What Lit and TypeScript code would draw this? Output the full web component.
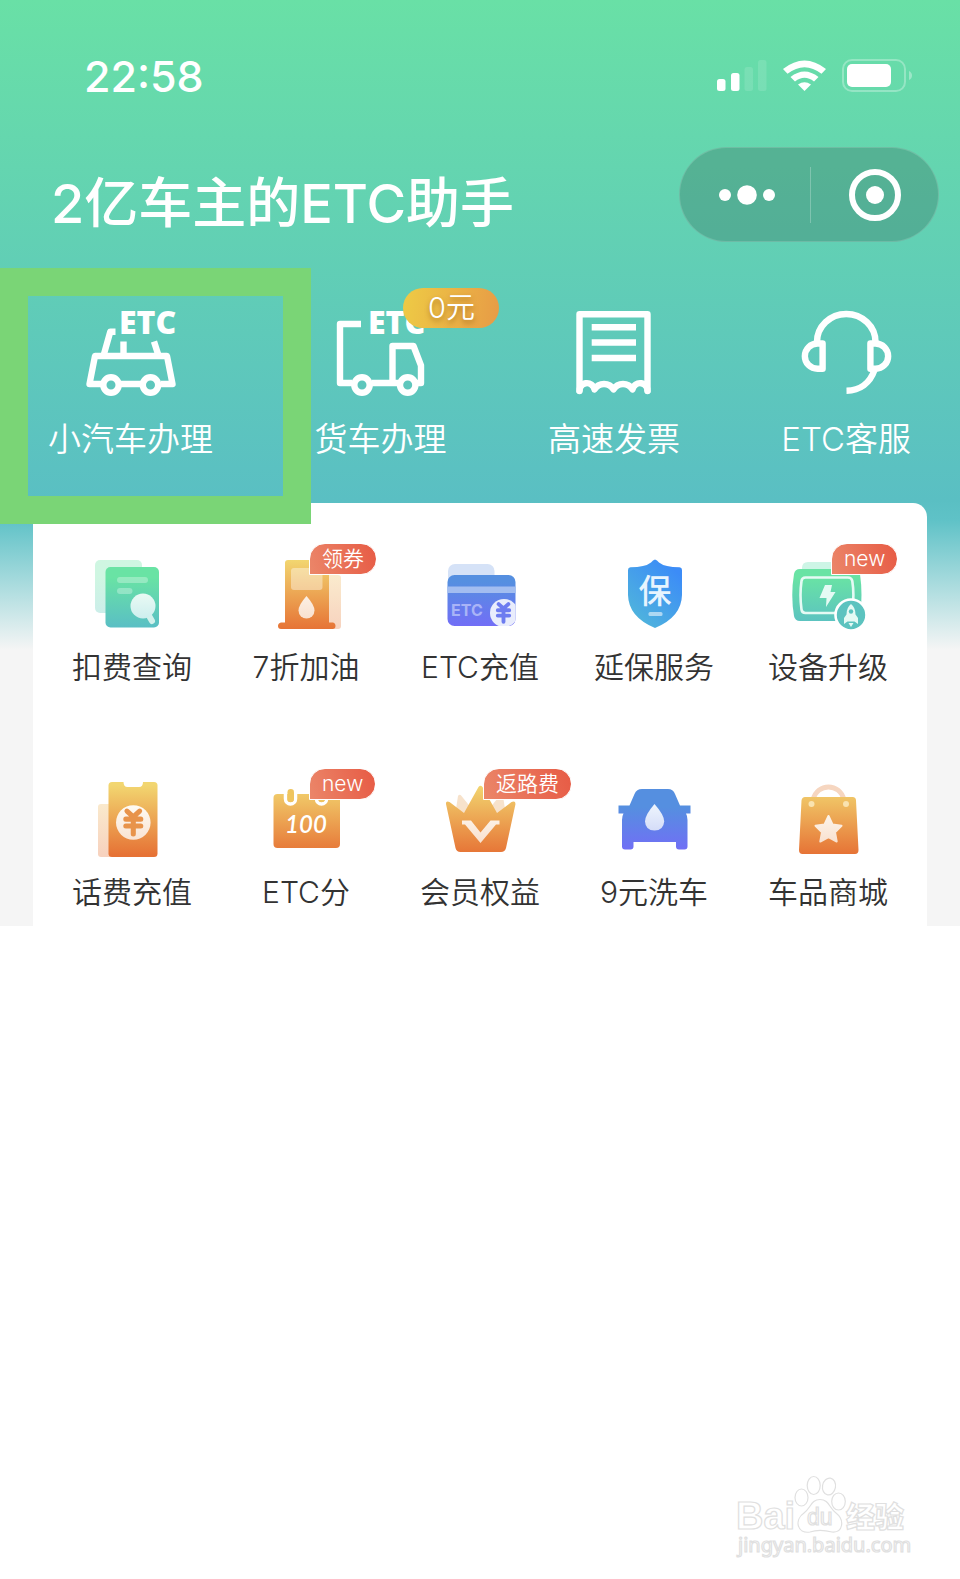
import { LitElement, html, svg, css, nothing, TemplateResult } from "lit";
import { customElement } from "lit/decorators.js";

interface Entry {
  label: string;
  icon: TemplateResult;
  badge?: string;
}

const yen = (x: number, y: number, s: number, color: string) => svg`
  <g transform="translate(${x} ${y}) scale(${s})" fill="none" stroke=${color} stroke-width="4.4" stroke-linecap="round" stroke-linejoin="round">
    <path d="M-5.5 -9.5L0 -4.5L5.5 -9.5M-6.5 -2.5H6.5M-6.5 3.5H6.5M0 -3V10.5"/>
  </g>`;

const wheels = (a: number, b: number) => svg`
  <circle cx=${a} cy="77" r="7.7"/><circle cx=${b} cy="77" r="7.7"/>`;

const etcMark = svg`<text class="mark" x="34" y="26">ETC</text>`;

const carIcon = svg`
  <path d="M16 76H4.5L10 48H82L87.5 76H76M36 76H56"/>
  <path d="M19 46L25.3 23.7H30.5M38.5 33.5V46M69 33.5L73 46"/>
  ${wheels(26, 65.5)}${etcMark}`;

const truckIcon = svg`
  <path d="M27 16H6V75H18M38 75H64M58.5 75V38H79.5L87 57.5V75H83"/>
  ${wheels(28, 73.7)}${etcMark}`;

const receiptIcon = svg`
  <path stroke-linecap="round" d="M11.5 83V6.2H79.5V83"/>
  <path d="M11.5 84A7.6 7.6 0 0 1 26.5 81.5A11 11 0 0 1 45.5 81.5A11 11 0 0 1 64.5 81.5A7.6 7.6 0 0 1 79.5 84"/>
  <path d="M23.7 19.3H68M23.7 34.5H68M23.7 50H68"/>`;

const headsetIcon = svg`
  <path d="M17 35V34A29.2 28 0 0 1 75.5 34V35"/>
  <path d="M22.6 35.5V60.8H17.5A12.6 12.6 0 0 1 17.5 35.5Z"/>
  <path d="M70.4 35.5V60.8H75.5A12.6 12.6 0 0 0 75.5 35.5Z"/>
  <path d="M74.5 62C70 75 60 82.5 46.5 82.7"/>`;

const services: Entry[] = [
  { label: "小汽车办理", icon: carIcon },
  { label: "货车办理", icon: truckIcon, badge: "0元" },
  { label: "高速发票", icon: receiptIcon },
  { label: "ETC客服", icon: headsetIcon },
];

const tools: Entry[] = [
  {
    label: "扣费查询",
    icon: svg`
      <rect x="3" y="8" width="47" height="53" rx="5" fill="url(#green)" opacity=".32"/>
      <rect x="13.5" y="15" width="53.5" height="60.5" rx="5" fill="url(#green)"/>
      <rect x="25" y="25" width="31" height="6" rx="3" fill="#fff" opacity=".3"/>
      <rect x="25" y="36" width="15.5" height="6" rx="3" fill="#fff" opacity=".3"/>
      <path d="M56 62L60 69" stroke="#d3f1ec" stroke-width="6" stroke-linecap="round"/>
      <circle cx="51" cy="54" r="12.5" fill="url(#pale-green)"/>`,
  },
  {
    label: "7折加油",
    badge: "领券",
    icon: svg`
      <rect x="60" y="23" width="15" height="54" rx="3" fill="url(#amber)" opacity=".32"/>
      <path d="M22 8H60Q63 8 63 11V70.5H67Q69.5 71 69.5 74Q69.5 77 66.5 77H15Q12 77 12 74Q12 71 15 70.5H19V11Q19 8 22 8Z" fill="url(#amber)"/>
      <rect x="25" y="16" width="31.5" height="22" rx="3" fill="#fff" opacity=".4"/>
      <path d="M40.5 44Q48.5 53 48.5 58.5A8 8 0 0 1 32.5 58.5Q32.5 53 40.5 44Z" fill="url(#pale-amber)"/>`,
  },
  {
    label: "ETC充值",
    icon: svg`
      <rect x="8" y="12" width="46.5" height="40" rx="7" fill="#d5e2f7"/>
      <clipPath id="card"><rect x="7" y="23" width="68.5" height="51" rx="7"/></clipPath>
      <rect x="7.5" y="23" width="68" height="51" rx="7" fill="url(#indigo)"/>
      <rect x="7.5" y="34.5" width="68" height="6.5" fill="#a2bdf0"/>
      <text class="card-mark" x="11" y="64">ETC</text>
      <g clip-path="url(#card)"><circle cx="64" cy="61" r="14" fill="#e9edfc"/></g>
      ${yen(63.5, 60.5, 0.88, "#6d7cf0")}`,
  },
  {
    label: "延保服务",
    icon: svg`
      <path d="M41 7.5Q43 8 45 10.5Q51 15.3 65.5 15.3Q68 15.5 68 18V43Q67.5 65 41 76Q14.5 65 14 43V18Q14 15.5 16.5 15.3Q31 15.3 37 10.5Q39 8 41 7.5Z" fill="url(#blue)"/>
      <text class="shield-mark" x="41" y="51" text-anchor="middle">保</text>
      <rect x="34.5" y="60" width="14" height="4" rx="1.5" fill="#fff" opacity=".55"/>`,
  },
  {
    label: "设备升级",
    badge: "new",
    icon: svg`
      <path d="M14 20V16Q14 10 20 10H60V20Z" fill="#cdf5e6"/>
      <path d="M12 17H66Q71 17 72 22Q75 43 72 64Q71 69 66 69H12Q7 69 6 64Q2.5 43 6 22Q7 17 12 17Z" fill="url(#green)"/>
      <path d="M17.5 25.5H60Q63.5 25.5 64.3 29Q66.5 43 64.3 57.5Q63.5 61 60 61H17.5Q14 61 13.5 57.5Q11.5 43 13.5 29Q14 25.5 17.5 25.5Z" fill="none" stroke="#e5faf4" stroke-width="2.6"/>
      <path d="M37 33H44L42.5 40H47.5L38 55L38.5 46H31.5Z" fill="#e5faf4"/>
      <circle cx="63" cy="63" r="15.5" fill="#5cc3bf" stroke="#fff" stroke-width="2.6"/>
      <path d="M63 52Q67.5 55.5 67.5 62.5L70 66V72L66.5 69.5H59.5L56 72V66L58.5 62.5Q58.5 55.5 63 52Z" fill="#e5faf4"/>
      <path d="M60.5 71H65.5L63 75Z" fill="#e5faf4"/>
      <circle cx="63" cy="59.5" r="2.2" fill="#5cc3bf"/>`,
  },
  {
    label: "话费充值",
    icon: svg`
      <rect x="6" y="27" width="20" height="53" rx="3" fill="url(#amber)" opacity=".32"/>
      <rect x="16.5" y="5" width="49" height="75" rx="3.5" fill="url(#amber)"/>
      <path d="M31.5 5H51Q51 10 47 10H35.5Q31.5 10 31.5 5Z" fill="#fff"/>
      <circle cx="41.3" cy="45.5" r="17.3" fill="url(#pale-amber)"/>
      ${yen(41.3, 45, 1.15, "#e8934a")}`,
  },
  {
    label: "ETC分",
    badge: "new",
    icon: svg`
      <rect x="7.5" y="17" width="66.5" height="54" rx="4" fill="url(#amber)"/>
      <path d="M19.5 15V22A5 5 0 0 0 29.5 22V15M50.5 15V22A5 5 0 0 0 60.5 22V15" fill="none" stroke="#fff" stroke-width="3.5"/>
      <rect x="21.5" y="12" width="6.5" height="13" rx="3.2" fill="#efc55f"/>
      <rect x="52.5" y="12" width="6.5" height="13" rx="3.2" fill="#efc55f"/>
      <text class="score" x="40" y="56" text-anchor="middle">100</text>`,
  },
  {
    label: "会员权益",
    badge: "返路费",
    icon: svg`
      <path d="M16 32L18 19Q19.5 16.5 21.5 19L32 32L26 38ZM65 32L63 19Q61.5 16.5 59.5 19L49 32L55 38Z" fill="#f7e2cb"/>
      <path d="M6 27Q5.5 23.5 9.5 25L24 36L38.5 10Q40.5 7.5 42.5 10L57 36L71.5 25Q75.5 23.5 75.5 27L66 71Q65 75 61 75H20.5Q16.5 75 15.5 71Z" fill="url(#amber)"/>
      <path d="M22 43.5H31L40.5 55.5L50.5 43.5H59.5V47.5H56L40.5 66L25 47.5H22Z" fill="url(#pale-amber)"/>`,
  },
  {
    label: "9元洗车",
    icon: svg`
      <path d="M28 12H54Q59 12 61 17L66 28.5H76.5V36.5H72Q73.5 39 73.5 43V69.5Q73.5 72.5 70.5 72.5H65Q62 72.5 62 69.5V65H19.5V69.5Q19.5 72.5 16.5 72.5H11Q8 72.5 8 69.5V43Q8 39 9.5 36.5H4.5V28.5H15.5L20.5 17Q22.5 12 28 12Z" fill="url(#indigo)"/>
      <path d="M40.5 27Q50.2 38 50.2 44.5Q49.5 53.5 40.5 53.5Q31.5 53.5 31 44.5Q31 38 40.5 27Z" fill="url(#pale-blue)"/>`,
  },
  {
    label: "车品商城",
    icon: svg`
      <path d="M25 23C29 5.5 52 5.5 56 23" fill="none" stroke="#f6d6c0" stroke-width="5"/>
      <path d="M17 20H64.5Q68 20 68 23.5L70.5 73Q70.5 77 67 77H14.5Q11 77 11 73L13.5 23.5Q14 20 17 20Z" fill="url(#amber)"/>
      <circle cx="23.5" cy="27" r="3" fill="#f9e3b0"/><circle cx="58" cy="27" r="3" fill="#f9e3b0"/>
      <path d="M40.5 39L44.5 47.5L53.5 48.8L47 55.2L48.7 64.5L40.5 60L32.3 64.5L34 55.2L27.5 48.8L36.5 47.5Z" fill="url(#pale-amber)" stroke="url(#pale-amber)" stroke-width="2" stroke-linejoin="round"/>`,
  },
];

@customElement("app-root")
export class AppRoot extends LitElement {
  static styles = css`
    :host {
      display: block;
      font-family: Inter, "Noto Sans CJK SC", sans-serif;
    }
    .page {
      position: relative;
      display: flex;
      flex-direction: column;
      min-height: 100vh;
      box-sizing: border-box;
      background: #fff;
    }
    .defs {
      position: absolute;
      width: 0;
      height: 0;
    }
    .top {
      padding-top: 56px;
      background: linear-gradient(#69e0a6 0, #5abfc3 500px, #5fc2c7 520px, #f5f5f5 650px);
    }
    .status {
      display: flex;
      align-items: center;
      justify-content: space-between;
      height: 40px;
      padding: 0 47px 0 84px;
      color: #fff;
    }
    .clock {
      font-size: 43px;
      font-weight: 500;
      line-height: 40px;
    }
    .signals {
      width: 196px;
      height: 34px;
    }
    .title-row {
      display: flex;
      align-items: flex-end;
      justify-content: space-between;
      margin-top: 51px;
      padding: 0 21px 0 51px;
    }
    h1 {
      margin: 0;
      color: #fff;
      font-size: 54px;
      font-weight: 500;
      line-height: 76px;
    }
    .capsule {
      display: flex;
      align-items: center;
      width: 260px;
      height: 95px;
      box-sizing: border-box;
      border: 1px solid rgba(255, 255, 255, 0.15);
      border-radius: 48px;
      background: rgba(62, 125, 108, 0.4);
    }
    .capsule button {
      flex: 1;
      display: flex;
      align-items: center;
      justify-content: center;
      height: 56px;
      padding: 0 0 0 4px;
      border: 0;
      background: none;
    }
    .capsule button + button {
      padding: 0 0 0 2px;
      border-left: 1px solid rgba(255, 255, 255, 0.25);
    }
    .more {
      width: 60px;
      height: 20px;
    }
    .close {
      width: 52px;
      height: 52px;
    }
    .services {
      display: flex;
      justify-content: space-between;
      margin-top: 66px;
      padding: 0 49px 0 48px;
    }
    .service {
      position: relative;
      display: flex;
      flex-direction: column;
      align-items: center;
      gap: 16px;
      color: #fff;
      font-size: 33px;
      font-weight: 350;
      line-height: 46px;
      text-decoration: none;
      white-space: nowrap;
    }
    .service svg {
      width: 92px;
      height: 92px;
      overflow: visible;
      fill: none;
      stroke: #fff;
      stroke-width: 6.4px;
      stroke-linejoin: round;
    }
    .mark {
      fill: #fff;
      stroke: none;
      font: 800 32px "Open Sans", sans-serif;
    }
    .price {
      position: absolute;
      top: -20px;
      left: 89px;
      width: 96px;
      border-radius: 20px;
      background: linear-gradient(100deg, #eecb45, #e79b46);
      font-size: 29px;
      line-height: 40px;
      text-align: center;
      text-shadow: 0 3px 5px rgba(120, 70, 0, 0.5);
    }
    .highlight {
      position: absolute;
      top: 268px;
      left: 0;
      width: 311px;
      height: 256px;
      box-sizing: border-box;
      border: 28px solid #7ad576;
      pointer-events: none;
    }
    .panel {
      display: grid;
      grid-template-columns: repeat(5, 1fr);
      row-gap: 90px;
      margin: 41px 33px 0;
      padding: 49px 12px 14px;
      border-radius: 14px 14px 0 0;
      background: #fff;
    }
    .tool {
      position: relative;
      display: flex;
      flex-direction: column;
      align-items: center;
      gap: 7px;
      color: #333;
      font-size: 30px;
      font-weight: 350;
      line-height: 40px;
      text-decoration: none;
      white-space: nowrap;
    }
    .tool svg {
      width: 80px;
      height: 88px;
    }
    .tag {
      position: absolute;
      top: -9px;
      left: calc(50% + 3px);
      padding: 0 12px;
      border: 1px solid #fff;
      border-radius: 16px 16px 16px 0;
      background: linear-gradient(75deg, #eb8669, #e75b45);
      color: #fff;
      font-size: 21px;
      line-height: 30px;
    }
    .card-mark {
      fill: #a9b4f7;
      font: 700 16px Inter, sans-serif;
    }
    .shield-mark {
      fill: #e8f4fe;
      font: 500 33px "Noto Sans CJK SC", sans-serif;
    }
    .score {
      fill: #fff;
      font: italic 600 24px Lato, sans-serif;
    }
    .watermark {
      align-self: flex-end;
      width: 176px;
      height: 90px;
      margin: auto 48px 15px 0;
      overflow: visible;
      fill: #fff;
      stroke: #e0e0e0;
      stroke-width: 1.2px;
    }
    .brand {
      font: 700 38px "Liberation Sans", sans-serif;
    }
    .du {
      font: 400 23px "Liberation Sans", sans-serif;
    }
    .brand-cn {
      font: 900 29px "Noto Sans CJK SC", sans-serif;
    }
    .site {
      font: 400 20px "Noto Sans", sans-serif;
    }
  `;

  private gradient(id: string, from: string, to: string, y1 = 8, y2 = 78) {
    return svg`<linearGradient id=${id} gradientUnits="userSpaceOnUse" x1="0" x2="0" y1=${y1} y2=${y2}>
      <stop offset="0" stop-color=${from}/><stop offset="1" stop-color=${to}/></linearGradient>`;
  }

  render() {
    return html`
      <div class="page">
        <svg class="defs" aria-hidden="true">
          ${this.gradient("green", "#69e3a4", "#5abfc4", 25, 75)}
          ${this.gradient("amber", "#f2d670", "#e67235")}
          ${this.gradient("indigo", "#558fe0", "#726ef6", 30, 74)}
          ${this.gradient("pale-green", "#e9faf4", "#cdeeee", 42, 67)}
          ${this.gradient("pale-amber", "#fefaf2", "#f8dfcd", 30, 68)}
          ${this.gradient("pale-blue", "#eef5fd", "#d4dcf8", 27, 54)}
          <linearGradient id="blue" x1=".8" y1=".1" x2=".2" y2=".9">
            <stop offset="0" stop-color="#3c8cf7" /><stop offset="1" stop-color="#4fb3dd" />
          </linearGradient>
        </svg>

        <header class="top">
          <div class="status">
            <span class="clock">22:58</span>
            <svg class="signals" viewBox="0 0 196 34" fill="#fff" aria-hidden="true">
              <rect y="20" width="8.5" height="12" rx="2.5" />
              <rect x="14" y="14" width="8.5" height="18" rx="2.5" />
              <rect x="27.5" y="8" width="8.5" height="24" rx="2.5" opacity=".12" />
              <rect x="41" y="1" width="8.5" height="31" rx="2.5" opacity=".12" />
              <path d="M66 10Q87.5 -7 109 10L104.5 14.8Q87.5 1.5 70.5 14.8Z" />
              <path d="M73.5 18Q87.5 7 101.5 18L97 22.5Q87.5 15 78 22.5Z" />
              <path d="M81 25.5Q87.5 21 94 25.5L87.5 32Z" />
              <rect x="126" y="1" width="62" height="31" rx="9" fill="none" stroke="#fff" stroke-width="2" opacity=".3" />
              <rect x="130" y="5" width="44" height="23" rx="5" />
              <path d="M192 12Q195 13.5 195 16.5T192 21Z" opacity=".35" />
            </svg>
          </div>

          <div class="title-row">
            <h1>2亿车主的ETC助手</h1>
            <div class="capsule">
              <button type="button" aria-label="更多">
                <svg class="more" viewBox="0 0 60 20" fill="#fff">
                  <circle cx="8" cy="10" r="6" /><circle cx="30" cy="10" r="9.8" /><circle cx="52" cy="10" r="6" />
                </svg>
              </button>
              <button type="button" aria-label="关闭">
                <svg class="close" viewBox="0 0 52 52">
                  <circle cx="26" cy="26" r="23" fill="none" stroke="#fff" stroke-width="6" />
                  <circle cx="26" cy="26" r="9" fill="#fff" />
                </svg>
              </button>
            </div>
          </div>

          <nav class="services">
            ${services.map(
              (s) => html`<a class="service" href="#">
                <svg viewBox="0 0 92 92" aria-hidden="true">${s.icon}</svg>
                <span>${s.label}</span>
                ${s.badge ? html`<span class="price">${s.badge}</span>` : nothing}
              </a>`
            )}
          </nav>

          <section class="panel">
            ${tools.map(
              (t) => html`<a class="tool" href="#">
                <svg viewBox="0 0 80 88" aria-hidden="true">${t.icon}</svg>
                <span>${t.label}</span>
                ${t.badge ? html`<span class="tag">${t.badge}</span>` : nothing}
              </a>`
            )}
          </section>
        </header>

        <div class="highlight"></div>

        <svg class="watermark" viewBox="0 0 176 90">
          <text class="brand" x="0" y="55">Bai</text>
          <ellipse cx="65.5" cy="23.5" rx="6.5" ry="8.5" />
          <ellipse cx="77.7" cy="11.5" rx="6.5" ry="9" />
          <ellipse cx="93" cy="12.5" rx="6.5" ry="8.5" transform="rotate(10 93 12.5)" />
          <ellipse cx="102.5" cy="27.5" rx="6.8" ry="8.5" />
          <path d="M84 25.5C93 25.5 93 34 100 39C109 46 107 59 96 58C88 56 80 56 74 58C61 60 58 46 68 39C75 34 75 25.5 84 25.5Z" />
          <text class="du" x="71" y="51">du</text>
          <text class="brand-cn" x="110" y="54">经验</text>
          <text class="site" x="2" y="78">jingyan.baidu.com</text>
        </svg>
      </div>
    `;
  }
}
